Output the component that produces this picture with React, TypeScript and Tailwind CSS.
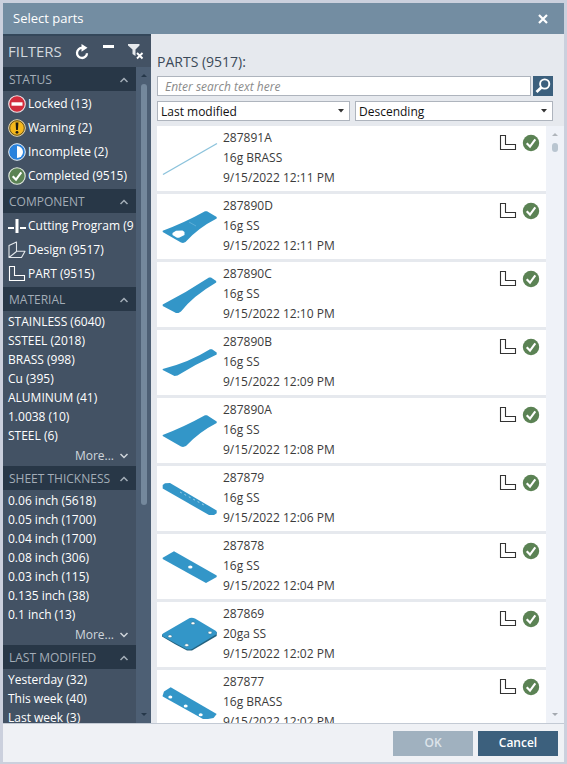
import type { ReactNode } from 'react';

type Part = { id: string; stock: string; modified: string; drawing: ReactNode };

const blue = '#3396c8';

const parts: Part[] = [
  {
    id: '287891A',
    stock: '16g BRASS',
    modified: '9/15/2022 12:11 PM',
    drawing: <path d="M1 48.5 55 17.5" stroke="#8cc3dc" strokeWidth="1.4" />,
  },
  {
    id: '287890D',
    stock: '16g SS',
    modified: '9/15/2022 12:11 PM',
    drawing: (
      <>
        <path d="M.7 36.7Q22 29 43 17.3H45L54.7 23V24.5Q36 34 23.5 48L21 49 19 48.5.7 38Z" fill={blue} />
        <path d="M14 36.7 20.5 36.5 22.5 38V41L17 43.7H15L10.5 41V39Z" fill="#fff" />
        <path d="m27 28 7 4" stroke="#68b4d9" strokeWidth=".8" />
      </>
    ),
  },
  {
    id: '287890C',
    stock: '16g SS',
    modified: '9/15/2022 12:10 PM',
    drawing: <path d="M.7 42.5Q25 30 47 15.5H49L54.2 19V20.5Q31 34 19 49.5L16.5 51H14L.7 44Z" fill={blue} />,
  },
  {
    id: '287890B',
    stock: '16g SS',
    modified: '9/15/2022 12:09 PM',
    drawing: <path d="M.7 39Q27 32.5 48 19.3H50L54.7 22.5V24.5Q34 34 15.5 45.5L12.5 46 .7 40Z" fill={blue} />,
  },
  {
    id: '287890A',
    stock: '16g SS',
    modified: '9/15/2022 12:08 PM',
    drawing: <path d="M.7 37Q22 29 43 17.3H45L54.7 23.5V25Q37 34 24 48L21 49 19 48.5.7 38Z" fill={blue} />,
  },
  {
    id: '287879',
    stock: '16g SS',
    modified: '9/15/2022 12:06 PM',
    drawing: (
      <>
        <path d="M.7 19 3 17.3 8 17 54.7 44.5 54.7 47.3 52 49 47 49 .7 22.5Z" fill={blue} />
        <path d="m18 26 24 13" stroke="#9fd0e8" strokeWidth="1" strokeDasharray="2 3" />
      </>
    ),
  },
  {
    id: '287878',
    stock: '16g SS',
    modified: '9/15/2022 12:04 PM',
    drawing: (
      <>
        <path d="M.7 23.7 12 17.2 54.7 41.5V43L44 49 .7 25Z" fill={blue} />
        <ellipse cx="28.3" cy="33" rx="2.2" ry="1.6" fill="#fff" />
      </>
    ),
  },
  {
    id: '287869',
    stock: '20ga SS',
    modified: '9/15/2022 12:02 PM',
    drawing: (
      <>
        <path d="M0 32.5V34.5Q12 42 25 48.5L30 48.5 54.7 34V30Z" fill="#24627f" />
        <path d="M1 31.5 26 17Q29 15 33 16.5L54 29Q55.5 31 54 32.5L30 47Q27 48 24 47L1 34.5Q-.5 33 1 31.5Z" fill={blue} />
        <g fill="#fff" stroke="#24627f" strokeWidth=".4">
          <ellipse cx="31" cy="21.3" rx="1.9" ry="1.4" />
          <ellipse cx="48" cy="30.7" rx="1.9" ry="1.4" />
          <ellipse cx="24.7" cy="43.2" rx="1.9" ry="1.4" />
          <ellipse cx="8" cy="34.3" rx="1.9" ry="1.4" />
        </g>
      </>
    ),
  },
  {
    id: '287877',
    stock: '16g BRASS',
    modified: '9/15/2022 12:02 PM',
    drawing: (
      <>
        <path d="M.7 25.5 2 21.5 8.7 17.3 54.7 44 51.5 48 46 49H41L.7 26.5Z" fill={blue} />
        <g fill="#fff">
          <ellipse cx="8.3" cy="27" rx="2" ry="1.5" />
          <ellipse cx="23.7" cy="36" rx="2" ry="1.5" />
          <ellipse cx="38.7" cy="44.7" rx="2" ry="1.5" />
        </g>
      </>
    ),
  },
];

function Chevron({ up = false }: { up?: boolean }) {
  return (
    <svg viewBox="0 0 10 6" className="h-[6px] w-[10px] shrink-0" fill="none" stroke="currentColor" strokeWidth="1.5" aria-hidden="true">
      <path d={up ? 'M1.5 5 5 1.5 8.5 5' : 'M1.5 1 5 4.5 8.5 1'} />
    </svg>
  );
}

function LockedIcon() {
  return (
    <svg viewBox="0 0 18 18" className="size-[18px]" aria-hidden="true">
      <circle cx="9" cy="9" r="8.3" fill="#d22c3c" stroke="#f1e4e8" strokeWidth="1.1" />
      <rect x="3.5" y="7.3" width="11" height="3.4" fill="#fff" />
    </svg>
  );
}

function WarningIcon() {
  return (
    <svg viewBox="0 0 18 18" className="size-[18px]" aria-hidden="true">
      <circle cx="9" cy="9" r="8.3" fill="#f6b81c" stroke="#e6d9b8" strokeWidth="1" />
      <circle cx="9" cy="9" r="7.3" fill="none" stroke="#55471f" strokeWidth=".9" />
      <path d="M7.6 3.4h2.8L9.9 11H8.1Z" fill="#1d1a12" />
      <circle cx="9" cy="13.3" r="1.4" fill="#1d1a12" />
    </svg>
  );
}

function IncompleteIcon() {
  return (
    <svg viewBox="0 0 18 18" className="size-[18px]" aria-hidden="true">
      <circle cx="9" cy="9" r="8.3" fill="#2a82dc" stroke="#e8f1fa" strokeWidth="1" />
      <path d="M9 3a6 6 0 0 1 0 12Z" fill="#fff" />
    </svg>
  );
}

function CompletedIcon({ ring = false }: { ring?: boolean }) {
  return (
    <svg viewBox="0 0 18 18" className="size-[18px]" aria-hidden="true">
      <circle cx="9" cy="9" r="8.2" fill="#5b8254" stroke={ring ? '#e2eadf' : '#5b8254'} strokeWidth={ring ? 1.1 : 0} />
      <path d="M4.7 9.2 8 12.6 13.3 5.4" fill="none" stroke="#fff" strokeWidth="2.1" />
    </svg>
  );
}

function CuttingIcon() {
  return (
    <svg viewBox="0 0 18 18" className="size-[18px]" fill="#fff" aria-hidden="true">
      <rect x="0" y="10" width="6" height="2" />
      <rect x="12" y="10" width="6" height="2" />
      <rect x="7.5" y="2" width="3" height="14" />
    </svg>
  );
}

function DesignIcon() {
  return (
    <svg viewBox="0 0 18 18" className="size-[18px]" fill="none" stroke="#e4e8ec" strokeWidth="1.1" strokeLinejoin="round" aria-hidden="true">
      <path d="M1 4.5 8.5 1v9.5L1 16.5ZM8.5 10.3H17l-3.5 6.2H1" />
    </svg>
  );
}

function BracketIcon() {
  return (
    <svg viewBox="0 0 18 18" className="size-[18px]" fill="none" stroke="currentColor" strokeWidth="1.1" aria-hidden="true">
      <path d="M1.5 1.5h5v9h10v5h-15Z" />
    </svg>
  );
}

function Section({ title, children }: { title: string; children: ReactNode }) {
  return (
    <section>
      <h3>
        <button type="button" className="flex h-6 w-full items-center justify-between bg-[#283747] pt-[2px] pr-[7px] pl-[6px] text-[12px] text-[#a3adb7]">
          {title}
          <Chevron up />
        </button>
      </h3>
      {children}
    </section>
  );
}

function IconFilters({ rows }: { rows: { icon: ReactNode; label: string }[] }) {
  return (
    <ul className="py-px">
      {rows.map((r) => (
        <li key={r.label}>
          <button type="button" className="flex h-6 w-full items-center gap-[2px] pl-[5px] text-left whitespace-nowrap">
            <span className="shrink-0">{r.icon}</span>
            <span>{r.label}</span>
          </button>
        </li>
      ))}
    </ul>
  );
}

function TextFilters({ rows, more = true }: { rows: string[]; more?: boolean }) {
  return (
    <>
      <ul className="pt-px">
        {rows.map((r) => (
          <li key={r}>
            <button type="button" className="block h-[19px] w-full pl-[5px] text-left leading-[19px] whitespace-nowrap">
              {r}
            </button>
          </li>
        ))}
      </ul>
      {more && (
        <button type="button" className="ml-auto flex h-[21px] items-center gap-[5px] pr-[7px] text-[#d0d6dc]">
          More...
          <Chevron />
        </button>
      )}
    </>
  );
}

function SortSelect({ label, options }: { label: string; options: string[] }) {
  return (
    <div className="relative h-5">
      <select aria-label={label} className="block h-full w-full appearance-none border border-[#aeb4bd] bg-white pt-px pl-[3px] text-[12px] leading-[18px] text-[#111]">
        {options.map((o) => (
          <option key={o}>{o}</option>
        ))}
      </select>
      <svg viewBox="0 0 6 4" className="pointer-events-none absolute top-[8px] right-[6px] h-[4px] w-[6px]" aria-hidden="true">
        <path d="M0 0h6L3 3.5Z" fill="#333" />
      </svg>
    </div>
  );
}

function PartRow({ part }: { part: Part }) {
  return (
    <li className="flex h-[65px] shrink-0 bg-white pr-[6px] pl-[5px]">
      <svg viewBox="0 0 56 64" className="h-16 w-14 shrink-0" fill="none" aria-hidden="true">
        {part.drawing}
      </svg>
      <div className="min-w-0 flex-1 pt-[2px] pl-[5px] leading-5 text-[#3b3b3b]">
        <p>{part.id}</p>
        <p>{part.stock}</p>
        <p>{part.modified}</p>
      </div>
      <div className="flex h-[18px] gap-[5px] pt-2 text-[#333]">
        <BracketIcon />
        <CompletedIcon />
      </div>
    </li>
  );
}

export default function App() {
  return (
    <div className="flex h-screen w-full flex-col overflow-hidden border-[3px] border-b-2 border-[#cbd0dd] bg-[#eff1f5] font-['Open_Sans','Noto_Sans',sans-serif] text-[12px]">
      <header className="flex h-[31px] shrink-0 items-center justify-between bg-[#738da2] pt-px pr-[15px] pl-[10px] text-white">
        <h1 className="text-[13px]">Select parts</h1>
        <button type="button" aria-label="Close">
          <svg viewBox="0 0 12 12" className="size-3" stroke="#fff" strokeWidth="2.2" aria-hidden="true">
            <path d="m2 2 8 8M10 2l-8 8" />
          </svg>
        </button>
      </header>

      <div className="flex min-h-0 flex-1">
        <aside className="flex w-[148px] shrink-0 flex-col bg-[#435264] text-white">
          <div className="flex h-[33px] shrink-0 items-center border-t-2 border-[#34475a] pr-[7px] pl-[5px]">
            <h2 className="flex-1 text-[15px] text-[#d3d9df]">FILTERS</h2>
            <div className="flex items-center gap-[14px]">
              <button type="button" aria-label="Refresh">
                <svg viewBox="0 0 14 16" className="h-4 w-[14px]" fill="none" aria-hidden="true">
                  <path d="M7.5 4A5 5 0 1 0 12 9.2" stroke="#fff" strokeWidth="2.3" />
                  <path d="M6.5 0 12.5 3.8 6.5 7.8Z" fill="#fff" />
                </svg>
              </button>
              <button type="button" aria-label="Collapse all">
                <svg viewBox="0 0 11 16" className="h-4 w-[11px]" aria-hidden="true">
                  <rect y="1" width="11" height="3" fill="#fff" />
                </svg>
              </button>
              <button type="button" aria-label="Clear filters">
                <svg viewBox="0 0 16 16" className="size-4" aria-hidden="true">
                  <path d="M0 0h11.5v1.5L7.5 5.5V12L4.5 10V5.5L0 1.5Z" fill="#e6e9ed" />
                  <path d="m9 9 5.5 5.5M14.5 9 9 14.5" stroke="#fff" strokeWidth="1.9" />
                </svg>
              </button>
            </div>
          </div>
          <div className="flex min-h-0 flex-1">
            <div className="min-w-0 flex-1 overflow-hidden">
              <Section title="STATUS">
                <IconFilters
                  rows={[
                    { icon: <LockedIcon />, label: 'Locked (13)' },
                    { icon: <WarningIcon />, label: 'Warning (2)' },
                    { icon: <IncompleteIcon />, label: 'Incomplete (2)' },
                    { icon: <CompletedIcon ring />, label: 'Completed (9515)' },
                  ]}
                />
              </Section>
              <Section title="COMPONENT">
                <IconFilters
                  rows={[
                    { icon: <CuttingIcon />, label: 'Cutting Program (9' },
                    { icon: <DesignIcon />, label: 'Design (9517)' },
                    { icon: <BracketIcon />, label: 'PART (9515)' },
                  ]}
                />
              </Section>
              <Section title="MATERIAL">
                <TextFilters rows={['STAINLESS (6040)', 'SSTEEL (2018)', 'BRASS (998)', 'Cu (395)', 'ALUMINUM (41)', '1.0038 (10)', 'STEEL (6)']} />
              </Section>
              <Section title="SHEET THICKNESS">
                <TextFilters
                  rows={['0.06 inch (5618)', '0.05 inch (1700)', '0.04 inch (1700)', '0.08 inch (306)', '0.03 inch (115)', '0.135 inch (38)', '0.1 inch (13)']}
                />
              </Section>
              <Section title="LAST MODIFIED">
                <TextFilters rows={['Yesterday (32)', 'This week (40)', 'Last week (3)']} more={false} />
              </Section>
            </div>
            <div className="flex w-[15px] shrink-0 flex-col items-center bg-[#4d5f74] py-[7px]">
              <svg viewBox="0 0 6 3" className="h-[3px] w-[6px] shrink-0" aria-hidden="true">
                <path d="M0 3h6L3 0Z" fill="#26384a" />
              </svg>
              <div className="flex w-full flex-1 justify-center pt-[7px]">
                <div className="h-[67%] w-[6px] rounded-full bg-[#74889c]" />
              </div>
              <svg viewBox="0 0 6 3" className="h-[3px] w-[6px] shrink-0" aria-hidden="true">
                <path d="M0 0h6L3 3Z" fill="#26384a" />
              </svg>
            </div>
          </div>
        </aside>

        <main className="flex min-w-0 flex-1 flex-col bg-[#e6e9ee] pl-[6px]">
          <div className="shrink-0 pr-[11px]">
            <h2 className="pt-4 pb-[2px] text-[14px] leading-6 text-[#3c4959]">PARTS (9517):</h2>
            <div className="flex gap-[2px]">
              <input
                type="text"
                aria-label="Search parts"
                placeholder="Enter search text here"
                className="h-5 min-w-0 flex-1 border border-[#aeb4bd] bg-white px-[7px] pt-px text-[12px] placeholder:text-[#8b8b8b] placeholder:italic"
              />
              <button type="button" aria-label="Search" className="flex size-5 items-center justify-center bg-[#3c607d]">
                <svg viewBox="0 0 16 16" className="size-4" fill="none" stroke="#fff" aria-hidden="true">
                  <circle cx="9.7" cy="6" r="4.6" strokeWidth="1.9" />
                  <path d="M6.3 9.4 1.5 14" strokeWidth="2.8" />
                </svg>
              </button>
            </div>
            <div className="grid grid-cols-[193fr_198fr] gap-[5px] py-[5px]">
              <SortSelect label="Sort by" options={['Last modified', 'Name', 'Material']} />
              <SortSelect label="Sort order" options={['Descending', 'Ascending']} />
            </div>
          </div>
          <div className="flex min-h-0 flex-1">
            <ul className="flex min-w-0 flex-1 flex-col gap-[3px] overflow-hidden">
              {parts.map((p) => (
                <PartRow key={p.id} part={p} />
              ))}
            </ul>
            <div className="flex w-[18px] shrink-0 flex-col items-center bg-[#eff2f8] py-[7px]">
              <svg viewBox="0 0 6 3" className="h-[3px] w-[6px] shrink-0" aria-hidden="true">
                <path d="M0 3h6L3 0Z" fill="#b0b5bb" />
              </svg>
              <div className="flex w-full flex-1 justify-center pt-[7px]">
                <div className="h-[9px] w-[6px] rounded-full bg-[#b9c5d0]" />
              </div>
              <svg viewBox="0 0 6 3" className="h-[3px] w-[6px] shrink-0" aria-hidden="true">
                <path d="M0 0h6L3 3Z" fill="#a4a9b0" />
              </svg>
            </div>
          </div>
        </main>
      </div>

      <footer className="flex h-[39px] shrink-0 items-center justify-end gap-[5px] border-t border-[#c3cad4] pr-[6px] font-semibold">
        <button type="button" disabled className="h-[25px] w-20 bg-[#a0b1bf] text-[#dde4ea]">
          OK
        </button>
        <button type="button" className="h-[25px] w-20 bg-[#3c607d] text-white">
          Cancel
        </button>
      </footer>
    </div>
  );
}
